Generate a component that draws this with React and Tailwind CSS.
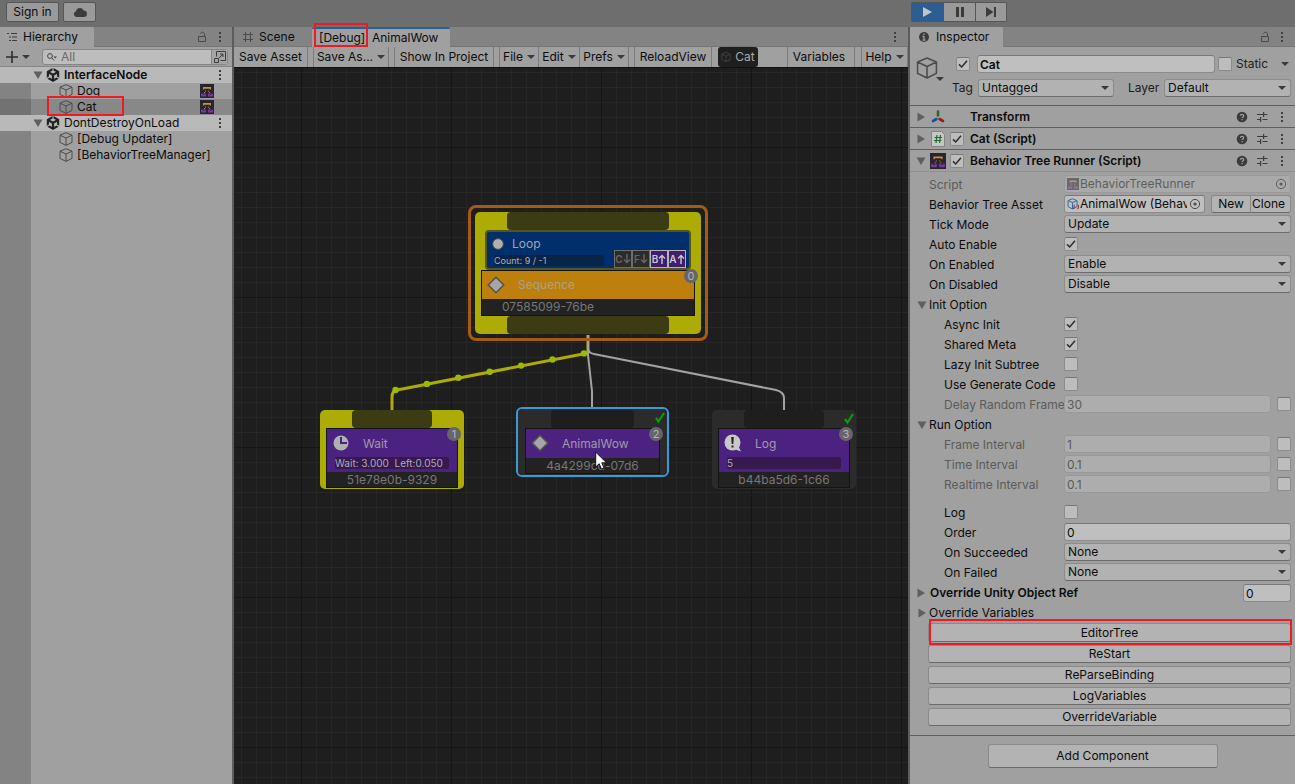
import { SiUnity } from "react-icons/si";

/* ---------- icons ---------- */

function Kebab() {
  return (
    <svg viewBox="0 0 4 12" className="h-3 w-1 flex-none" fill="#3f3f3f" aria-hidden="true">
      <rect x="1" y="1" width="2" height="2" />
      <rect x="1" y="5" width="2" height="2" />
      <rect x="1" y="9" width="2" height="2" />
    </svg>
  );
}

function Lock() {
  return (
    <svg viewBox="0 0 10 12" className="h-3 w-2.5 flex-none" fill="none" stroke="#4a4a4a" aria-hidden="true">
      <path d="M1.5 5.5h7v5h-7z" />
      <path d="M7.5 5.5V3.2C7.5 1.8 6.6 1.2 5.5 1.2S3.6 1.8 3.4 2.8" />
    </svg>
  );
}

function Caret() {
  return (
    <svg viewBox="0 0 8 4" className="h-1 w-2 flex-none" fill="#3a3a3a" aria-hidden="true">
      <path d="M0 0h8L4 4z" />
    </svg>
  );
}

function Fold({ open }) {
  return (
    <svg viewBox="0 0 10 10" className="size-2.5 flex-none" fill="#5f5f5f" aria-hidden="true">
      {open ? <path d="M.5 1.500h9L5 9z" /> : <path d="M1.500 .5 9 5 1.500 9.500z" />}
    </svg>
  );
}

function Cube({ className, color }) {
  return (
    <svg viewBox="0 0 14 14" className={className} fill="none" stroke={color} strokeLinejoin="round" aria-hidden="true">
      <path d="M7 .7 13 3.200v7.200L7 13.400 1 10.400V3.200zM1 3.200 7 6l6-2.800M7 6v7.400" />
    </svg>
  );
}

function TreeIcon({ className }) {
  return (
    <svg viewBox="0 0 14 14" className={className} aria-hidden="true">
      <rect width="14" height="14" fill="#26262b" />
      <path d="M3 3h8v2.500H9.800V4.700H4.200v.8H3z" fill="#cf8a45" />
      <path d="M5 6.500h1v1H5zM4 8h1v1H4z" fill="#8f8f8f" />
      <path d="M8 6.500h1v1H8zM9 8h1v1H9z" fill="#a98a28" />
      <path d="M1 9.500h5v3H1zM8 9.500h5v3H8z" fill="#7a35a3" />
      <path d="M2.500 9.500h2v1h-2zM9.500 9.500h2v1h-2z" fill="#46205f" />
    </svg>
  );
}

function Help() {
  return (
    <svg viewBox="0 0 12 12" className="size-3 flex-none" aria-hidden="true">
      <circle cx="6" cy="6" r="5.300" fill="#3c3c3c" />
      <path d="M4.400 4.800c0-2 3.300-2 3.300 0 0 1.100-1.600 1.200-1.600 2.300M6.100 8v1.200" fill="none" stroke="#a0a0a0" strokeWidth="1.200" />
    </svg>
  );
}

function Presets() {
  return (
    <svg viewBox="0 0 12 12" className="size-3 flex-none" fill="none" stroke="#3c3c3c" strokeWidth="1.200" aria-hidden="true">
      <path d="M1 3.500h6M7.600 1v5M7.600 3.500h3.900M1 8.500h3M4.600 6v5M6.500 8.500h5" />
    </svg>
  );
}

function Target() {
  return (
    <svg viewBox="0 0 12 12" className="size-3 flex-none" aria-hidden="true">
      <circle cx="6" cy="6" r="4.600" fill="none" stroke="#4a4a4a" />
      <circle cx="6" cy="6" r="1.600" fill="#4a4a4a" />
    </svg>
  );
}

function Diamond() {
  return (
    <svg viewBox="0 0 18 18" className="size-[18px]" aria-hidden="true">
      <path d="M9 1.200 16.800 9 9 16.800 1.200 9z" fill="#a6a6a6" stroke="#55504a" strokeWidth="1.500" />
    </svg>
  );
}

/* ---------- shared controls ---------- */

function Marker({ className }) {
  return <span aria-hidden="true" className={"pointer-events-none absolute z-20 border-2 border-[#ed1c24] " + className} />;
}

function Check({ id, label, checked }) {
  return (
    <span className="grid size-3.5 flex-none place-items-center">
      <input
        id={id}
        type="checkbox"
        aria-label={label}
        defaultChecked={checked}
        className="peer col-start-1 row-start-1 size-3.5 appearance-none rounded-xs border border-[#8b8b8b] border-t-[#787878] bg-[#bdbdbd]"
      />
      <svg viewBox="0 0 10 10" className="pointer-events-none invisible col-start-1 row-start-1 size-2.5 peer-checked:visible" fill="none" stroke="#2c2c2c" strokeWidth="1.500">
        <path d="M1 5.400 3.700 8 9 1.800" />
      </svg>
    </span>
  );
}

function Select({ id, value }) {
  return (
    <span className="grid h-[18px] min-w-0 flex-1 items-center">
      <select id={id} className="col-start-1 row-start-1 h-[18px] w-full appearance-none rounded-[3px] border border-[#8c8c8c] border-b-[#6c6c6c] bg-[#b2b2b2] pl-[3px] text-[#0c0c0c]">
        <option>{value}</option>
      </select>
      <span className="pointer-events-none col-start-1 row-start-1 mr-[5px] justify-self-end">
        <Caret />
      </span>
    </span>
  );
}

function Field({ id, value, dim, className = "" }) {
  return (
    <input
      id={id}
      type="text"
      defaultValue={value}
      disabled={dim}
      className={
        "h-[18px] w-full min-w-0 flex-1 rounded-[3px] border px-[2px] " +
        (dim ? "border-[#999] bg-[#adadad] text-[#5b5b5b] " : "border-[#8b8b8b] border-t-[#787878] bg-[#bfbfbf] text-[#0c0c0c] ") +
        className
      }
    />
  );
}

const BTN = "rounded-[3px] border border-[#8a8a8a] border-b-[#6a6a6a] bg-[#b3b3b3] text-[#0c0c0c]";

function Row({ id, label, indent, dim, children }) {
  return (
    <div className="flex h-5 items-start pr-1">
      <label
        htmlFor={id}
        className={"w-[154px] flex-none overflow-hidden whitespace-nowrap leading-5 " + (indent ? "pl-[34px] " : "pl-[19px] ") + (dim ? "text-[#5b5b5b]" : "")}
      >
        {label}
      </label>
      <div className="flex h-[18px] min-w-0 flex-1 items-center">{children}</div>
    </div>
  );
}

/* ---------- hierarchy ---------- */

function SceneRow({ name, bold }) {
  return (
    <div className={"flex h-4 items-center bg-[#b9b9b9] pl-[33px] pr-2.5 " + (bold ? "font-semibold" : "")}>
      <Fold open />
      <SiUnity className="ml-[3px] size-3.5 flex-none text-[#222]" />
      <span className="ml-1 flex-1 leading-4">{name}</span>
      <Kebab />
    </div>
  );
}

function ObjectRow({ name, selected, tree, marked }) {
  return (
    <div className={"relative flex h-4 items-center " + (selected ? "bg-[#888]" : "")}>
      <span className={"h-4 w-[31px] flex-none " + (selected ? "bg-[#727272]" : "")} />
      <Cube className="ml-7 size-3.5 flex-none" color="#4c4c4c" />
      <span className="ml-1 h-4 flex-1 overflow-hidden leading-4">{name}</span>
      {tree && <TreeIcon className="mr-[18px] size-3.5" />}
      {marked && <Marker className="-top-[3px] left-[47px] h-5 w-[77px]" />}
    </div>
  );
}

function Hierarchy() {
  return (
    <section className="flex w-[232px] flex-none flex-col bg-[#a0a0a0]">
      <header className="flex h-5 items-center border-b border-[#767676] bg-[#838383] pr-2.5">
        <h2 className="flex h-5 w-[94px] items-center gap-[5px] rounded-tr-xs bg-[#a0a0a0] pl-[7px] pt-px">
          <svg viewBox="0 0 11 10" className="h-2.5 w-[11px]" stroke="#3c3c3c" aria-hidden="true">
            <path d="M0 1.500h2M4 1.500h6M2 5h2M5 5h5M2 8.500h2M5 8.500h5" />
          </svg>
          Hierarchy
        </h2>
        <span className="flex-1" />
        <Lock />
        <span className="w-[11px]" />
        <Kebab />
      </header>
      <div className="flex h-5 items-center border-b border-[#858585] pl-1.5 pr-1">
        <button type="button" aria-label="Create" className="flex items-center gap-1">
          <svg viewBox="0 0 12 12" className="size-3" stroke="#2e2e2e" strokeWidth="1.600" aria-hidden="true">
            <path d="M6 0v12M0 6h12" />
          </svg>
          <Caret />
        </button>
        <div className="ml-3 flex h-4 min-w-0 flex-1 items-center rounded-[3px] border border-[#868686] bg-[#bdbdbd] pl-1">
          <svg viewBox="0 0 10 8" className="h-2 w-2.5 flex-none" fill="none" stroke="#454545" aria-hidden="true">
            <circle cx="3" cy="3" r="2.400" />
            <path d="M4.800 4.800 7 7.500" />
            <path d="M6.500 3.500h3.500L8.200 5.500z" fill="#454545" stroke="none" />
          </svg>
          <input type="search" aria-label="Search hierarchy" placeholder="All" className="h-3.5 w-full min-w-0 flex-1 pl-1 placeholder:text-[#6a6a6a]" />
          <button type="button" aria-label="Open search window" className="grid h-3.5 w-4 flex-none place-items-center border-l border-[#868686] bg-[#a5a5a5]">
            <svg viewBox="0 0 12 12" className="size-3" fill="none" stroke="#3d3d3d" aria-hidden="true">
              <path d="M2.500 5.500v-5h9v9h-5M.5 7.500h4v4h-4zM5 7l4-4M6 3h3v3" />
            </svg>
          </button>
        </div>
      </div>
      <div className="flex flex-1 flex-col bg-linear-to-r from-[#838383] from-[31px] to-[#a0a0a0] to-[31px]">
        <SceneRow name="InterfaceNode" bold />
        <ObjectRow name="Dog" tree />
        <ObjectRow name="Cat" tree selected marked />
        <SceneRow name="DontDestroyOnLoad" />
        <ObjectRow name="[Debug Updater]" />
        <ObjectRow name="[BehaviorTreeManager]" />
      </div>
    </section>
  );
}

/* ---------- graph view ---------- */

const TOOL = "flex h-5 flex-none items-center justify-center gap-1 whitespace-nowrap border-r border-[#7b7b7b]";

function Badge({ children, className }) {
  return (
    <span className={"absolute grid size-3.5 place-items-center rounded-full bg-[#67646b] text-[11px] leading-none text-[#b4b4b4] " + className}>
      {children}
    </span>
  );
}

function Tick({ className }) {
  return (
    <svg viewBox="0 0 10 12" className={"absolute h-3 w-2.5 " + className} fill="none" stroke="#0a9a0a" strokeWidth="2.200" aria-hidden="true">
      <path d="M1 6 3.500 9.500 9 1" />
    </svg>
  );
}

function LeafNode({ className, frame, port, icon, title, info, guid, index, done }) {
  return (
    <article className={"absolute rounded-md " + className}>
      <div className={"flex flex-col items-center rounded-[5px] " + frame}>
        <div className={"h-[18px] rounded " + port} />
        <div className="relative w-full border border-[#141414] bg-[#222]">
          <div className="bg-[#4c2280] pb-px">
            <div className="flex h-7 items-center gap-[13px] pl-[5px]">
              <span className="grid w-[18px] place-items-center">{icon}</span>
              <span className="pt-px text-[#9f9aa8]">{title}</span>
            </div>
            {info && <p className="mx-2 mb-0.5 h-3 whitespace-pre rounded-xs bg-[#35194f] text-[10px] leading-3 text-[#b0acb6]">{info}</p>}
          </div>
          <p className="h-[15px] text-center leading-[15px] text-[#777]">{guid}</p>
          <Badge className="-right-1 -top-0.5">{index}</Badge>
        </div>
      </div>
      {done && <Tick className="right-0.5 top-[3px]" />}
    </article>
  );
}

function Flag({ letter, dir, on }) {
  return (
    <span className={"flex h-[18px] w-[18px] items-center justify-center border text-[10px] font-semibold " + (on ? "border-[#b5b5b5] bg-[#3f1d70] text-[#c8c8c8]" : "border-[#6e6e6e] bg-[#2b2b2b] text-[#666]")}>
      {letter}
      <svg viewBox="0 0 8 10" className="h-2.5 w-2 flex-none" fill="none" stroke="currentColor" strokeWidth="1.400" aria-hidden="true">
        {dir === "up" ? <path d="M4 10V1.500M1 4.500l3-3 3 3" /> : <path d="M4 0v8.500M1 5.500l3 3 3-3" />}
      </svg>
    </span>
  );
}

const DOTS = [0, 1, 2, 3, 4, 5, 6];

function Canvas() {
  return (
    <div className="relative min-h-[717px] flex-1 overflow-hidden border-t border-[#111] bg-[#1e1e1e]">
      <svg className="absolute inset-0 size-full" aria-hidden="true">
        <defs>
          <pattern id="minor" x="7" y="4" width="15" height="15" patternUnits="userSpaceOnUse">
            <path d="M.5 0v15M0 .5h15" stroke="#262626" />
          </pattern>
          <pattern id="major" x="67" y="79" width="150" height="150" patternUnits="userSpaceOnUse">
            <path d="M.5 0v150M0 .5h150" stroke="#151515" />
          </pattern>
        </defs>
        <rect width="100%" height="100%" fill="url(#minor)" />
        <rect width="100%" height="100%" fill="url(#major)" />
        <g fill="none" strokeWidth="2">
          <path d="M354 267v16q0 3-5 3L163 322q-5 1-5 7v13" stroke="#adab05" strokeWidth="3" />
          <path d="M354 267v20L358 323v20" stroke="#a3a3a3" />
          <path d="M354 267v13q0 5 6 6L542 322q8 2 8 8v13" stroke="#a3a3a3" />
        </g>
        {DOTS.map((i) => (
          <circle key={i} cx={161.500 + i * 31.4} cy={322 - i * 6.100} r="3.200" fill="#9aba08" />
        ))}
      </svg>

      <article className="absolute left-[234px] top-[137px] w-[240px] rounded-lg border-[3px] border-[#a35c16] p-1">
        <div className="flex flex-col items-center rounded-[5px] bg-[#adab05] px-1.5">
          <div className="h-[18px] w-[162px] rounded bg-[#3c3c14]" />
          <div className="h-10 w-[206px] rounded border-2 border-[#56561a] bg-[#002f6c]">
            <div className="flex h-full justify-between pl-[7px] pr-[3px]">
              <div className="flex flex-col">
                <div className="-ml-0.5 flex h-[23px] items-center gap-2">
                  <svg viewBox="0 0 12 12" className="size-3" aria-hidden="true">
                    <circle cx="6" cy="6" r="5.400" fill="#b0b0b0" stroke="#444" />
                  </svg>
                  <span className="text-[#a0a6b0]">Loop</span>
                </div>
                <p className="h-[11px] w-[110px] rounded-xs bg-[#082448] text-[9px] leading-3 text-[#b0b0b0]">Count: 9 / -1</p>
              </div>
              <div className="flex self-end">
                <Flag letter="C" dir="down" />
                <Flag letter="F" dir="down" />
                <Flag letter="B" dir="up" on />
                <Flag letter="A" dir="up" on />
              </div>
            </div>
          </div>
          <div className="relative w-full border border-[#141414] bg-[#222]">
            <div className="flex h-7 items-center gap-[13px] bg-[#be800d] pl-[5px] text-[#a8a090]">
              <Diamond />
              Sequence
            </div>
            <p className="h-4 pl-5 leading-4 text-[#777]">07585099-76be</p>
            <Badge className="-right-1 -top-0.5">0</Badge>
          </div>
          <div className="h-[18px] w-[162px] rounded bg-[#3c3c14]" />
        </div>
      </article>

      <LeafNode
        className="left-[86px] top-[342px] w-36"
        frame="bg-[#adab05] px-1.5 pb-px"
        port="w-20 bg-[#3c3c14]"
        title="Wait"
        info="Wait: 3.000  Left:0.050"
        guid="51e78e0b-9329"
        index="1"
        icon={
          <svg viewBox="0 0 16 16" className="size-4" aria-hidden="true">
            <circle cx="8" cy="8" r="7.500" fill="#b0b0b0" />
            <path d="M8 2v6h6" fill="none" stroke="#4c2280" strokeWidth="2" />
          </svg>
        }
      />
      <LeafNode
        className="left-[282px] top-[339px] w-[153px] border-2 border-[#3a9bd4]"
        frame="bg-[#2b2b2b] px-[7px] pb-px pt-px"
        port="w-[83px] bg-[#1e1e1e]"
        title="AnimalWow"
        guid="4a4299cd-07d6"
        index="2"
        done
        icon={<Diamond />}
      />
      <LeafNode
        className="left-[478px] top-[342px] w-36"
        frame="bg-[#2b2b2b] px-1.5 pb-px"
        port="w-20 bg-[#1e1e1e]"
        title="Log"
        info="5"
        guid="b44ba5d6-1c66"
        index="3"
        done
        icon={
          <svg viewBox="0 0 18 18" className="size-[18px]" aria-hidden="true">
            <circle cx="8.500" cy="8.500" r="8" fill="#c8c8c8" />
            <path d="M10 14l5-3q-.5 3.500 2 6.500-4-.5-7-3.500z" fill="#c8c8c8" />
            <path d="M7.200 3h2.600l-.5 7H7.700zM7.500 11.500h2v2h-2z" fill="#222" />
          </svg>
        }
      />
      <svg viewBox="0 0 12 19" className="absolute left-[361px] top-[383px] h-[19px] w-3" aria-hidden="true">
        <path d="M.7 1v15l3.500-3.300 2.200 5.300 2.600-1-2.200-5.200h4.700z" fill="#fff" stroke="#111" />
      </svg>
    </div>
  );
}

function GraphView() {
  return (
    <section className="flex min-w-0 flex-1 flex-col bg-[#a0a0a0]">
      <header className="flex h-5 items-center border-b border-[#767676] bg-[#838383] pr-[11px]">
        <h2 className="flex w-[78px] flex-none items-center gap-[5px] pl-2 pt-px">
          <svg viewBox="0 0 12 12" className="size-3" stroke="#4a4a4a" aria-hidden="true">
            <path d="M3.500 1v10M8.500 1v10M1 3.500h10M1 8.500h10" />
          </svg>
          Scene
        </h2>
        <h2 className="relative flex h-5 w-[138px] flex-none items-center whitespace-pre rounded-t-xs border-t-2 border-[#2c5d93] bg-[#a0a0a0] pl-[7px]">
          {"[Debug]  AnimalWow"}
          <Marker className="-top-1.5 left-0.5 h-6 w-[54px]" />
        </h2>
        <span className="flex-1" />
        <Kebab />
      </header>
      <div className="flex h-5 min-w-0 overflow-hidden">
        <button type="button" className={TOOL + " w-[74px]"}>Save Asset</button>
        <button type="button" className={TOOL + " ml-[5px] w-[76px] border-l"}>Save As...<Caret /></button>
        <button type="button" className={TOOL + " ml-[5px] w-[100px] border-l"}>Show In Project</button>
        <button type="button" className={TOOL + " ml-[5px] w-10 border-l"}>File<Caret /></button>
        <button type="button" className={TOOL + " w-[41px]"}>Edit<Caret /></button>
        <button type="button" className={TOOL + " w-[49px]"}>Prefs<Caret /></button>
        <button type="button" className={TOOL + " ml-[5px] w-[78px] border-l"}>ReloadView</button>
        <button type="button" className="ml-1.5 flex h-5 w-10 flex-none items-center justify-center gap-1 rounded-[3px] bg-[#1f1f1f] text-[#a8a8a8]">
          <Cube className="size-2.5" color="#4a4a4a" />
          Cat
        </button>
        <span className="flex-1" />
        <button type="button" className={TOOL + " w-[68px] border-l pr-1"}>Variables</button>
        <button type="button" className={TOOL + " ml-[6px] w-[47px] border-l"}>Help<Caret /></button>
      </div>
      <Canvas />
    </section>
  );
}

/* ---------- inspector ---------- */

function ComponentBar({ open, icon, name, toggle }) {
  return (
    <div className="flex h-[22px] items-center border-t border-[#5f5f5f] pl-1.5 pr-[11px]">
      <Fold open={open} />
      <span className="ml-1 grid w-4 flex-none place-items-center">{icon}</span>
      <span className="ml-1 w-5 flex-none">{toggle && <Check label={"Enable " + name} checked />}</span>
      <h3 className="flex-1 font-semibold">{name}</h3>
      <Help />
      <span className="w-2" />
      <Presets />
      <span className="w-3" />
      <Kebab />
    </div>
  );
}

function Heading({ open, label }) {
  return (
    <h4 className="flex h-5 items-center gap-0.5 pl-[7px]">
      <Fold open={open} />
      {label}
    </h4>
  );
}

function OptionalRow({ id, label, value }) {
  return (
    <Row id={id} label={label} indent dim>
      <Field id={id} value={value} dim />
      <span className="ml-1.5 flex">
        <Check label={"Override " + label} />
      </span>
    </Row>
  );
}

function Inspector() {
  return (
    <section className="flex w-[385px] flex-none flex-col bg-[#a0a0a0]">
      <header className="flex h-5 items-center border-b border-[#767676] bg-[#838383] pr-[11px]">
        <h2 className="flex h-5 w-[93px] items-center gap-1.5 rounded-tr-xs bg-[#a0a0a0] pl-2 pt-px">
          <svg viewBox="0 0 12 12" className="size-3" aria-hidden="true">
            <circle cx="6" cy="6" r="5" fill="#3c3c3c" />
            <path d="M6 2.500v1.500M6 5v4.500M4.500 5.500H6M4.500 9.200h3" stroke="#a0a0a0" strokeWidth="1.300" />
          </svg>
          Inspector
        </h2>
        <span className="flex-1" />
        <Lock />
        <span className="w-2.5" />
        <Kebab />
      </header>

      <div className="flex h-[58px] pr-1 pt-2">
        <button type="button" aria-label="Object icon" className="flex w-8 flex-none items-start pl-1.5 pt-0.5">
          <Cube className="size-[22px] flex-none" color="#4c4c4c" />
          <span className="-ml-0.5 mt-5 flex"><Caret /></span>
        </button>
        <div className="flex min-w-0 flex-1 flex-col gap-1.5">
          <div className="flex h-[18px] items-center pr-0.5">
            <span className="ml-3.5 mr-[7px] flex"><Check label="Active" checked /></span>
            <input aria-label="Name" defaultValue="Cat" className="h-[18px] min-w-0 flex-1 rounded-[3px] border border-[#8b8b8b] border-t-[#787878] bg-[#bfbfbf] px-[2px] font-semibold" />
            <span className="ml-[3px] mr-1 flex"><Check id="static" /></span>
            <label htmlFor="static" className="w-[45px] text-[#222]">Static</label>
            <Caret />
          </div>
          <div className="flex h-[18px] items-center">
            <label htmlFor="tag" className="w-9 flex-none pl-[10px] text-[#1c1c1c]">Tag</label>
            <Select id="tag" value="Untagged" />
            <label htmlFor="layer" className="w-[50px] flex-none pl-3.5 text-[#1c1c1c]">Layer</label>
            <span className="flex w-[127px] flex-none"><Select id="layer" value="Default" /></span>
          </div>
        </div>
      </div>

      <ComponentBar
        name="Transform"
        icon={
          <svg viewBox="0 0 14 14" className="size-3.5" fill="none" strokeWidth="2.600" aria-hidden="true">
            <path d="M7 1.500v4" stroke="#256b25" strokeLinecap="round" />
            <path d="M5.500 9 2 11" stroke="#1c4fa8" strokeLinecap="round" />
            <path d="M8.500 9 12 11" stroke="#a01a1a" strokeLinecap="round" />
          </svg>
        }
      />
      <ComponentBar
        name="Cat (Script)"
        toggle
        icon={
          <svg viewBox="0 0 14 16" className="h-4 w-3.5" aria-hidden="true">
            <path d="M.5 .5h10l3 3v12H.5z" fill="#c4c8c4" stroke="#858585" />
            <path d="M6 4 5 12M9.500 4l-1 8M3.500 6.500h7.500M3 9.500h7.500" stroke="#1f6b2a" strokeWidth="1.200" />
          </svg>
        }
      />
      <ComponentBar open name="Behavior Tree Runner (Script)" toggle icon={<TreeIcon className="size-4" />} />

      <div className="flex flex-col border-t border-[#8f8f8f] pt-[3px]">
        <Row id="script" label="Script" dim>
          <div className="flex h-[18px] min-w-0 flex-1 items-center rounded-[3px] border border-[#999] bg-[#adadad] pl-[2px] pr-[3px] opacity-80">
            <TreeIcon className="size-3 flex-none opacity-60" />
            <input id="script" disabled defaultValue="BehaviorTreeRunner" className="min-w-0 flex-1 pl-px text-[#4f4f4f]" />
            <Target />
          </div>
        </Row>
        <Row id="asset" label="Behavior Tree Asset">
          <div className="flex h-[18px] min-w-0 flex-1 items-center rounded-[3px] border border-[#8b8b8b] border-t-[#787878] bg-[#bfbfbf] pl-[2px] pr-[3px]">
            <svg viewBox="0 0 12 12" className="size-3 flex-none" fill="none" aria-hidden="true">
              <path d="M5.500 .8 10 2.600v6L5.500 11 1 8.600v-6zM1 2.600l4.500 2 4.500-2M5.500 4.600V11" stroke="#2f6da8" />
              <path d="M8 7q-1 0-1 1.500T7 11M10.500 7q1 0 1 1.500t-1 2.500" stroke="#a33" strokeWidth="1.200" />
            </svg>
            <input id="asset" defaultValue="AnimalWow (BehaviorTree)" className="min-w-0 flex-1 pl-px" />
            <button type="button" aria-label="Pick asset" className="ml-0.5 flex"><Target /></button>
          </div>
          <button type="button" className={BTN + " ml-1.5 h-[18px] w-10 rounded-r-none leading-4"}>New</button>
          <button type="button" className={BTN + " h-[18px] w-10 rounded-l-none border-l-0 pr-1 leading-4"}>Clone</button>
        </Row>
        <Row id="tick" label="Tick Mode"><Select id="tick" value="Update" /></Row>
        <Row id="auto" label="Auto Enable"><Check id="auto" checked /></Row>
        <Row id="enabled" label="On Enabled"><Select id="enabled" value="Enable" /></Row>
        <Row id="disabled" label="On Disabled"><Select id="disabled" value="Disable" /></Row>
        <Heading open label="Init Option" />
        <Row id="async" label="Async Init" indent><Check id="async" checked /></Row>
        <Row id="meta" label="Shared Meta" indent><Check id="meta" checked /></Row>
        <Row id="lazy" label="Lazy Init Subtree" indent><Check id="lazy" /></Row>
        <Row id="gen" label="Use Generate Code" indent><Check id="gen" /></Row>
        <OptionalRow id="delay" label="Delay Random Frame" value="30" />
        <Heading open label="Run Option" />
        <OptionalRow id="frame" label="Frame Interval" value="1" />
        <OptionalRow id="time" label="Time Interval" value="0.1" />
        <OptionalRow id="realtime" label="Realtime Interval" value="0.1" />
        <div className="h-2" />
        <Row id="log" label="Log" indent><Check id="log" /></Row>
        <Row id="order" label="Order" indent><Field id="order" value="0" /></Row>
        <Row id="ok" label="On Succeeded" indent><Select id="ok" value="None" /></Row>
        <Row id="fail" label="On Failed" indent><Select id="fail" value="None" /></Row>
        <div className="flex h-5 items-center gap-1 pl-1.5 pr-1">
          <Fold />
          <label htmlFor="refs" className="flex-1 font-semibold">Override Unity Object Ref</label>
          <span className="flex w-12"><Field id="refs" value="0" /></span>
        </div>
        <Heading label="Override Variables" />
      </div>

      <div className="flex flex-col gap-[3px] pb-[9px] pl-[18px] pr-1">
        <div className="relative flex">
          <button type="button" className={BTN + " h-[19px] flex-1 leading-4"}>EditorTree</button>
          <Marker className="-bottom-[3px] -right-px -top-1 left-px" />
        </div>
        <button type="button" className={BTN + " h-[18px] leading-4"}>ReStart</button>
        <button type="button" className={BTN + " h-[18px] leading-4"}>ReParseBinding</button>
        <button type="button" className={BTN + " h-[18px] leading-4"}>LogVariables</button>
        <button type="button" className={BTN + " h-[18px] leading-4"}>OverrideVariable</button>
      </div>
      <div className="flex justify-center border-t border-[#5f5f5f] pt-2">
        <button type="button" className={BTN + " h-6 w-[230px]"}>Add Component</button>
      </div>
    </section>
  );
}

/* ---------- shell ---------- */

const TOP = "grid h-5 place-items-center border border-[#565656]";

export default function App() {
  return (
    <div className="flex min-h-screen flex-col bg-[#6e6e6e] font-['Inter','Liberation_Sans',sans-serif] text-[12px] leading-4 text-[#0c0c0c]">
      <header className="flex h-[27px] items-center pb-[3px]">
        <button type="button" className={TOP + " ml-1.5 w-[53px] rounded-xs bg-[#9a9a9a]"}>Sign in</button>
        <button type="button" aria-label="Cloud" className={TOP + " ml-1 w-[33px] rounded-xs bg-[#9a9a9a]"}>
          <svg viewBox="0 0 14 10" className="h-2.5 w-3.5" fill="#3c3c3c" aria-hidden="true">
            <path d="M3.300 10A3 3 0 0 1 3 4.200 4 4 0 0 1 10.600 3.600 3.200 3.200 0 0 1 10.800 10z" />
          </svg>
        </button>
        <span className="flex-1" />
        <div className="mr-[288px] flex">
          <button type="button" aria-label="Play" className={TOP + " w-[33px] rounded-l-xs bg-[#2c5d93]"}>
            <svg viewBox="0 0 9 10" className="h-2.5 w-[9px]" fill="#c4c4c4" aria-hidden="true"><path d="M0 0l9 5-9 5z" /></svg>
          </button>
          <button type="button" aria-label="Pause" className={TOP + " w-8 border-l-0 bg-[#9a9a9a]"}>
            <svg viewBox="0 0 8 10" className="h-2.5 w-2" fill="#3c3c3c" aria-hidden="true"><path d="M0 0h3v10H0zM5 0h3v10H5z" /></svg>
          </button>
          <button type="button" aria-label="Step" className={TOP + " w-[31px] rounded-r-xs border-l-0 bg-[#9a9a9a]"}>
            <svg viewBox="0 0 10 10" className="size-2.5" fill="#3c3c3c" aria-hidden="true"><path d="M0 0l7.500 5L0 10zM8 0h2v10H8z" /></svg>
          </button>
        </div>
      </header>
      <main className="flex flex-1 gap-0.5 bg-[#5c5c5c]">
        <Hierarchy />
        <GraphView />
        <Inspector />
      </main>
    </div>
  );
}
